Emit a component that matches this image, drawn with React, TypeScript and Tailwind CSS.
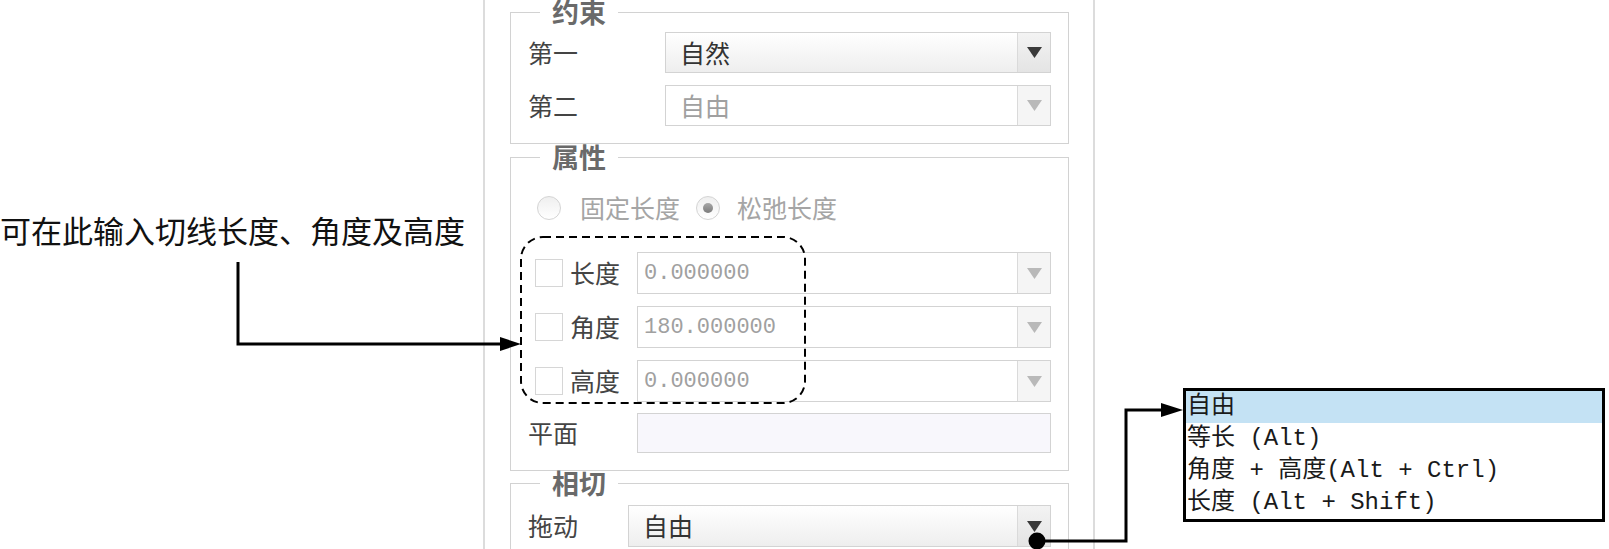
import React from 'react';

type Kids = { children?: React.ReactNode };

function Caret({ disabled }: { disabled?: boolean }) {
    return (
        <svg width="15" height="11" viewBox="0 0 15 11">
            <polygon points="0,0 15,0 7.5,11" fill={disabled ? '#b9b9b9' : '#3a3a3a'} />
        </svg>
    );
}

function Select({ value, disabled, mono }: { value: string; disabled?: boolean; mono?: boolean }) {
    return (
        <div
            className={`flex h-full flex-1 border border-[#d3d3d3] ${
                disabled ? 'bg-white' : 'bg-linear-to-b from-white to-[#eeeeee]'
            }`}
        >
            <div
                className={`flex flex-1 items-center ${
                    mono
                        ? "pl-[6px] font-['Liberation_Mono','Noto_Sans_CJK_SC',monospace] text-[22px]"
                        : 'pl-[14px] text-[25px]'
                } ${disabled ? 'text-[#a0a0a0]' : 'text-[#333333]'}`}
            >
                {value}
            </div>
            <div
                className={`flex w-[33px] items-center justify-center border-l border-[#dadada] ${
                    disabled ? 'bg-[#f5f5f5]' : 'bg-linear-to-b from-[#f3f3f3] to-[#e4e4e4]'
                }`}
            >
                <Caret disabled={disabled} />
            </div>
        </div>
    );
}

function Group({ title, children }: { title: string } & Kids) {
    return (
        <fieldset className="border border-[#d2d2d2] px-[17px] pb-[17px]">
            <legend className="ml-[12px] px-[12px] text-[27px] font-bold leading-[24px] text-[#6a6a6a]">{title}</legend>
            {children}
        </fieldset>
    );
}

function Radio({ checked }: { checked?: boolean }) {
    return (
        <span className="flex h-[24px] w-[24px] shrink-0 items-center justify-center rounded-full border border-[#d4d4d4] bg-linear-to-b from-[#efefef] to-white">
            {checked && <span className="h-[10px] w-[10px] rounded-full bg-linear-to-b from-[#a8a8a8] to-[#7c7c7c]" />}
        </span>
    );
}

function CheckRow({ label, value }: { label: string; value: string }) {
    return (
        <div className="flex h-[42px] items-center">
            <div className="flex w-[109px] items-center pl-[7px]">
                <span className="h-[28px] w-[28px] shrink-0 border border-[#d6d6d6] bg-white" />
                <span className="ml-[7px] text-[25px] text-[#444444]">{label}</span>
            </div>
            <Select value={value} disabled mono />
        </div>
    );
}

export default function App() {
    return (
        <div className="relative flex h-[549px] w-[1609px] overflow-hidden bg-white font-['Noto_Sans_CJK_SC','Noto_Sans',sans-serif]">
            {/* annotation text */}
            <div className="w-[483px] shrink-0 pt-[214px]">
                <p className="whitespace-nowrap text-[31px] leading-[31px] text-[#111111]">可在此输入切线长度、角度及高度</p>
            </div>

            {/* panel */}
            <div className="w-[612px] shrink-0 border-x-2 border-[#dcdcdc] bg-white pl-[25px] pr-[24px]">
                <Group title="约束">
                    <div className="mt-[8px] flex flex-col gap-[12px]">
                        <div className="flex h-[41px] items-center">
                            <span className="w-[137px] text-[25px] text-[#444444]">第一</span>
                            <Select value="自然" />
                        </div>
                        <div className="flex h-[41px] items-center">
                            <span className="w-[137px] text-[25px] text-[#444444]">第二</span>
                            <Select value="自由" disabled />
                        </div>
                    </div>
                </Group>

                <div className="mt-[1px]">
                    <Group title="属性">
                        <div className="mt-[24px] flex h-[30px] items-center pl-[9px] text-[25px] text-[#a5a5a5]">
                            <Radio />
                            <span className="ml-[19px]">固定长度</span>
                            <span className="ml-[16px]">
                                <Radio checked />
                            </span>
                            <span className="ml-[17px]">松弛长度</span>
                        </div>
                        <div className="mt-[29px] flex flex-col gap-[12px]">
                            <CheckRow label="长度" value="0.000000" />
                            <CheckRow label="角度" value="180.000000" />
                            <CheckRow label="高度" value="0.000000" />
                        </div>
                        <div className="mt-[11px] flex h-[40px] items-center">
                            <span className="w-[109px] text-[25px] text-[#444444]">平面</span>
                            <div className="h-full flex-1 border border-[#d3d3d3] bg-[#f8f7fc]" />
                        </div>
                    </Group>
                </div>

                <Group title="相切">
                    <div className="mt-[10px] flex h-[42px] items-center">
                        <span className="w-[100px] text-[25px] text-[#444444]">拖动</span>
                        <Select value="自由" />
                    </div>
                </Group>
            </div>

            {/* drag options menu */}
            <div className="flex-1 pl-[88px] pt-[388px]">
                <div className="w-[422px] border-[3px] border-black bg-white font-['Liberation_Mono','Noto_Sans_CJK_SC',monospace] text-[24px] leading-[32px] whitespace-pre text-[#1a1a1a]">
                    <div className="h-[32px] bg-[#c4e2f4] pl-[1px]">自由</div>
                    <div className="h-[32px] pl-[1px]">等长 (Alt)</div>
                    <div className="h-[32px] pl-[1px]">角度 + 高度(Alt + Ctrl)</div>
                    <div className="h-[32px] pl-[1px]">长度 (Alt + Shift)</div>
                </div>
            </div>

            {/* callout lines */}
            <svg className="pointer-events-none absolute left-0 top-0" width="1609" height="549">
                <path d="M238 262 V344 H503" fill="none" stroke="#000" strokeWidth="3" />
                <polygon points="500,337 521,344 500,351" fill="#000" />
                <rect x="521" y="237" width="284" height="166" rx="22" fill="none" stroke="#000" strokeWidth="2" strokeDasharray="8 5" />
                <path d="M1037 541 H1126 V410 H1165" fill="none" stroke="#000" strokeWidth="3" />
                <polygon points="1161,403 1183,410 1161,417" fill="#000" />
                <circle cx="1037" cy="541" r="8.5" fill="#000" />
            </svg>
        </div>
    );
}
